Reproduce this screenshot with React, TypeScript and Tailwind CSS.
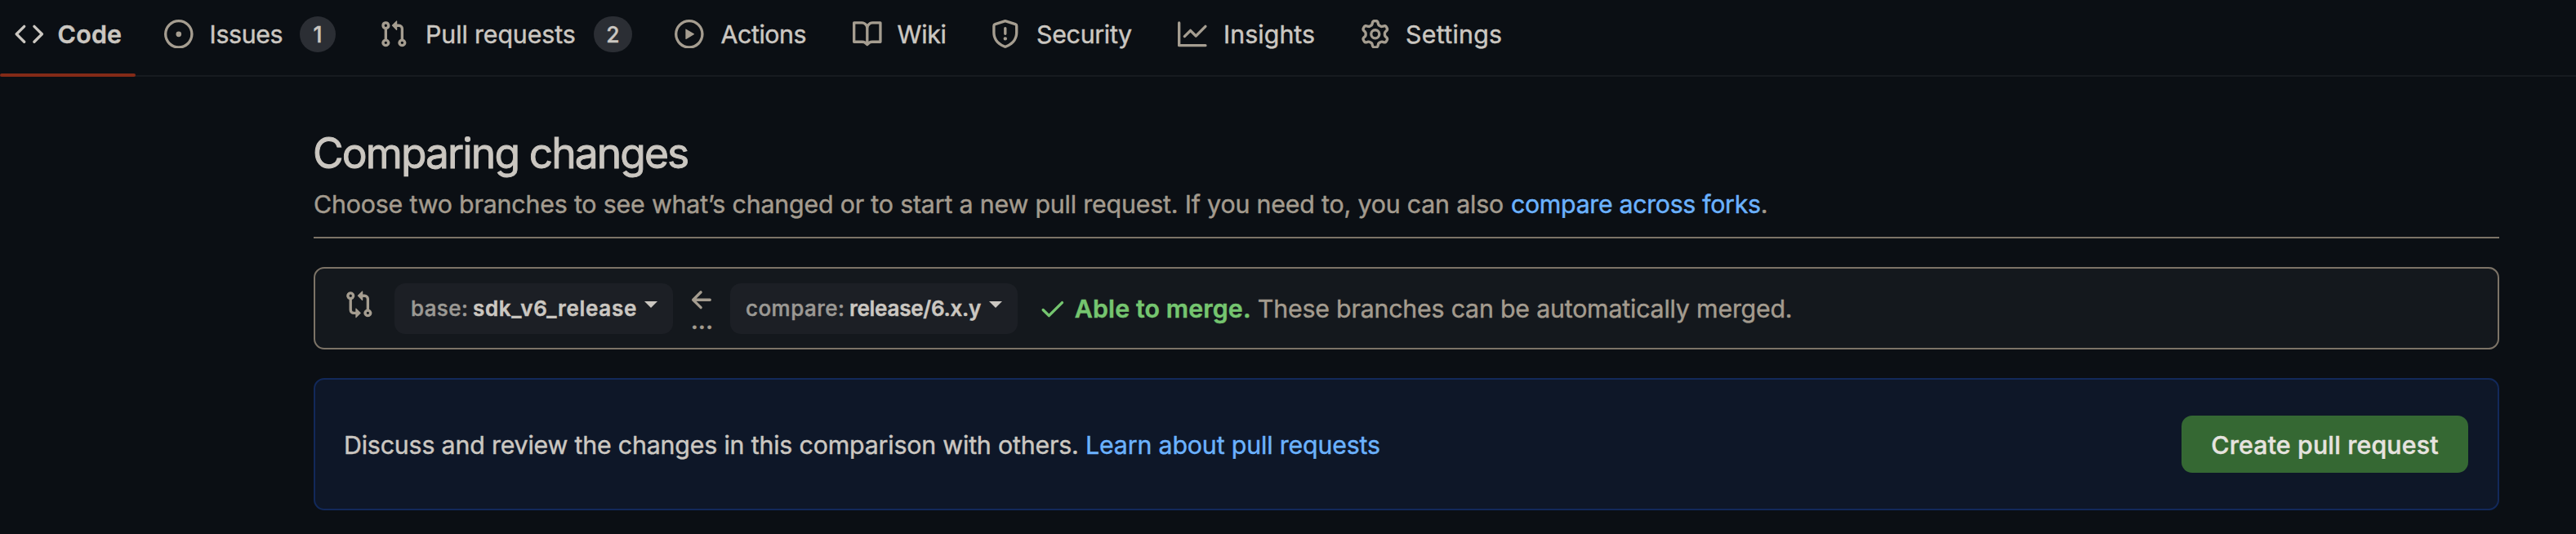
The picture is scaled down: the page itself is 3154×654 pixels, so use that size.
import type { ReactNode } from "react";

const paths = {
  code: "m11.28 3.22 4.25 4.25a.75.75 0 0 1 0 1.06l-4.25 4.25a.749.749 0 0 1-1.275-.326.749.749 0 0 1 .215-.734L13.94 8l-3.72-3.72a.749.749 0 0 1 .326-1.275.749.749 0 0 1 .734.215Zm-6.56 0a.751.751 0 0 1 1.042.018.751.751 0 0 1 .018 1.042L2.06 8l3.72 3.72a.749.749 0 0 1-.326 1.275.749.749 0 0 1-.734-.215L.47 8.53a.75.75 0 0 1 0-1.06Z",
  issue: "M8 9.5a1.5 1.5 0 1 0 0-3 1.5 1.5 0 0 0 0 3ZM8 0a8 8 0 1 1 0 16A8 8 0 0 1 8 0ZM1.5 8a6.5 6.5 0 1 0 13 0 6.5 6.5 0 0 0-13 0Z",
  pull: "M1.5 3.25a2.25 2.25 0 1 1 3 2.122v5.256a2.251 2.251 0 1 1-1.5 0V5.372A2.25 2.25 0 0 1 1.5 3.25Zm5.677-.177L9.573.677A.25.25 0 0 1 10 .854V2.5h1A2.5 2.5 0 0 1 13.5 5v5.628a2.251 2.251 0 1 1-1.5 0V5a1 1 0 0 0-1-1h-1v1.646a.25.25 0 0 1-.427.177L7.177 3.427a.25.25 0 0 1 0-.354ZM3.75 2.5a.75.75 0 1 0 0 1.5.75.75 0 0 0 0-1.5Zm0 9.5a.75.75 0 1 0 0 1.5.75.75 0 0 0 0-1.5Zm8.25.75a.75.75 0 1 0 1.5 0 .75.75 0 0 0-1.5 0Z",
  play: "M8 0a8 8 0 1 1 0 16A8 8 0 0 1 8 0ZM1.5 8a6.5 6.5 0 1 0 13 0 6.5 6.5 0 0 0-13 0Zm4.879-2.773 4.264 2.559a.25.25 0 0 1 0 .428l-4.264 2.559A.25.25 0 0 1 6 10.559V5.442a.25.25 0 0 1 .379-.215Z",
  book: "M0 1.75A.75.75 0 0 1 .75 1h4.253c1.227 0 2.317.59 3 1.501A3.743 3.743 0 0 1 11.006 1h4.245a.75.75 0 0 1 .75.75v10.5a.75.75 0 0 1-.75.75h-4.507a2.25 2.25 0 0 0-1.591.659l-.622.621a.75.75 0 0 1-1.06 0l-.622-.621A2.25 2.25 0 0 0 5.258 13H.75a.75.75 0 0 1-.75-.75Zm7.251 10.324.004-5.073-.002-2.253A2.25 2.25 0 0 0 5.003 2.5H1.5v9h3.757a3.75 3.75 0 0 1 1.994.574ZM8.755 4.75l-.004 7.322a3.752 3.752 0 0 1 1.992-.572H14.5v-9h-3.495a2.25 2.25 0 0 0-2.25 2.25Z",
  shield: "M7.467.133a1.748 1.748 0 0 1 1.066 0l5.25 1.68A1.75 1.75 0 0 1 15 3.48V7c0 1.566-.32 3.182-1.303 4.682-.983 1.498-2.585 2.813-5.032 3.855a1.697 1.697 0 0 1-1.33 0c-2.447-1.042-4.049-2.357-5.032-3.855C1.32 10.182 1 8.566 1 7V3.48a1.75 1.75 0 0 1 1.217-1.667Zm.61 1.429a.25.25 0 0 0-.153 0l-5.25 1.68a.25.25 0 0 0-.174.238V7c0 1.358.275 2.666 1.057 3.86.784 1.194 2.121 2.34 4.366 3.297a.196.196 0 0 0 .154 0c2.245-.956 3.582-2.104 4.366-3.298C13.225 9.666 13.5 8.36 13.5 7V3.48a.251.251 0 0 0-.174-.237l-5.25-1.68ZM8.75 4.75v3a.75.75 0 0 1-1.5 0v-3a.75.75 0 0 1 1.5 0ZM9 10.5a1 1 0 1 1-2 0 1 1 0 0 1 2 0Z",
  graph: "M1.5 1.75V13.5h13.75a.75.75 0 0 1 0 1.5H.75a.75.75 0 0 1-.75-.75V1.75a.75.75 0 0 1 1.5 0Zm14.28 2.53-5.25 5.25a.75.75 0 0 1-1.06 0L7 7.06 4.28 9.78a.751.751 0 0 1-1.042-.018.751.751 0 0 1-.018-1.042l3.25-3.25a.75.75 0 0 1 1.06 0L10 7.94l4.72-4.72a.751.751 0 0 1 1.042.018.751.751 0 0 1 .018 1.042Z",
  gear: "M8 0a8.2 8.2 0 0 1 .701.031C9.444.095 9.99.645 10.16 1.29l.288 1.107c.018.066.079.158.212.224.231.114.454.243.668.386.123.082.233.09.299.071l1.103-.303c.644-.176 1.392.021 1.82.63.27.385.506.792.704 1.218.315.675.111 1.422-.364 1.891l-.814.806c-.049.048-.098.147-.088.294.016.257.016.515 0 .772-.01.147.038.246.088.294l.814.806c.475.469.679 1.216.364 1.891a7.977 7.977 0 0 1-.704 1.217c-.428.61-1.176.807-1.82.63l-1.102-.302c-.067-.019-.177-.011-.3.071a5.909 5.909 0 0 1-.668.386c-.133.066-.194.158-.211.224l-.29 1.106c-.168.646-.715 1.196-1.458 1.26a8.006 8.006 0 0 1-1.402 0c-.743-.064-1.289-.614-1.458-1.26l-.289-1.106c-.018-.066-.079-.158-.212-.224a5.738 5.738 0 0 1-.668-.386c-.123-.082-.233-.09-.299-.071l-1.103.303c-.644.176-1.392-.021-1.82-.63a8.12 8.12 0 0 1-.704-1.218c-.315-.675-.111-1.422.363-1.891l.815-.806c.05-.048.098-.147.088-.294a6.214 6.214 0 0 1 0-.772c.01-.147-.038-.246-.088-.294l-.815-.806C.635 6.045.431 5.298.746 4.623a7.92 7.92 0 0 1 .704-1.217c.428-.61 1.176-.807 1.82-.63l1.102.302c.067.019.177.011.3-.071.214-.143.437-.272.668-.386.133-.066.194-.158.211-.224l.29-1.106C6.009.645 6.556.095 7.299.03 7.53.01 7.764 0 8 0Zm-.571 1.525c-.036.003-.108.036-.137.146l-.289 1.105c-.147.561-.549.967-.998 1.189-.173.086-.34.183-.5.29-.417.278-.97.423-1.529.27l-1.103-.303c-.109-.03-.175.016-.195.045-.22.312-.412.644-.573.99-.014.031-.021.11.059.19l.815.806c.411.406.562.957.53 1.456a4.709 4.709 0 0 0 0 .582c.032.499-.119 1.05-.53 1.456l-.815.806c-.081.08-.073.159-.059.19.162.346.353.677.573.989.02.03.085.076.195.046l1.102-.303c.56-.153 1.113-.008 1.53.27.161.107.328.204.501.29.447.222.85.629.997 1.189l.289 1.105c.029.109.101.143.137.146a6.6 6.6 0 0 0 1.142 0c.036-.003.108-.036.137-.146l.289-1.105c.147-.561.549-.967.998-1.189.173-.086.34-.183.5-.29.417-.278.97-.423 1.529-.27l1.103.303c.109.029.175-.016.195-.045.22-.313.411-.644.573-.99.014-.031.021-.11-.059-.19l-.815-.806c-.411-.406-.562-.957-.53-1.456a4.709 4.709 0 0 0 0-.582c-.032-.499.119-1.05.53-1.456l.815-.806c.081-.08.073-.159.059-.19a6.464 6.464 0 0 0-.573-.989c-.02-.03-.085-.076-.195-.046l-1.102.303c-.56.153-1.113.008-1.53-.27a4.44 4.44 0 0 0-.501-.29c-.447-.222-.85-.629-.997-1.189l-.289-1.105c-.029-.11-.101-.143-.137-.146a6.6 6.6 0 0 0-1.142 0ZM11 8a3 3 0 1 1-6 0 3 3 0 0 1 6 0ZM9.5 8a1.5 1.5 0 1 0-3.001.001A1.5 1.5 0 0 0 9.5 8Z",
  compare: "M9.573.677A.25.25 0 0 1 10 .854V2.5h1A2.5 2.5 0 0 1 13.5 5v5.628a2.251 2.251 0 1 1-1.5 0V5a1 1 0 0 0-1-1h-1v1.646a.25.25 0 0 1-.427.177L7.177 3.427a.25.25 0 0 1 0-.354ZM6 12v-1.646a.25.25 0 0 1 .427-.177l2.396 2.396a.25.25 0 0 1 0 .354l-2.396 2.396A.25.25 0 0 1 6 15.146V13.5H5A2.5 2.5 0 0 1 2.5 11V5.372a2.25 2.25 0 1 1 1.5 0V11a1 1 0 0 0 1 1ZM4 3.25a.75.75 0 1 0-1.5 0 .75.75 0 0 0 1.5 0ZM12.75 12a.75.75 0 1 0 0 1.5.75.75 0 0 0 0-1.5Z",
  arrow: "M7.78 12.53a.75.75 0 0 1-1.06 0L2.47 8.28a.75.75 0 0 1 0-1.06l4.25-4.25a.751.751 0 0 1 1.042.018.751.751 0 0 1 .018 1.042L4.81 7h7.44a.75.75 0 0 1 0 1.5H4.81l2.97 2.97a.75.75 0 0 1 0 1.06Z",
  check: "M13.78 4.22a.75.75 0 0 1 0 1.06l-7.25 7.25a.75.75 0 0 1-1.06 0L2.22 9.28a.751.751 0 0 1 .018-1.042.751.751 0 0 1 1.042-.018L6 10.94l6.72-6.72a.75.75 0 0 1 1.06 0Z",
};

function Icon({ name, className }: { name: keyof typeof paths; className: string }) {
  return (
    <svg viewBox="0 0 16 16" fill="currentColor" className={`size-[35.6px] shrink-0 ${className}`}>
      <path d={paths[name]} />
    </svg>
  );
}

type Tab = {
  icon: keyof typeof paths;
  label: string;
  item: string;
  text: string;
  count?: number;
  badge?: string;
  active?: boolean;
};

const tabs: Tab[] = [
  { icon: "code", label: "Code", item: "w-[183px]", text: "ml-[17px] font-semibold tracking-[0.27px]", active: true },
  { icon: "issue", label: "Issues", item: "w-[262.5px]", text: "ml-[20px] tracking-[-0.34px]", count: 1, badge: "mr-[52.5px] w-11" },
  { icon: "pull", label: "Pull requests", item: "w-[362.5px]", text: "ml-[22px] tracking-[-0.1px]", count: 2, badge: "mr-[52px] w-[47px]" },
  { icon: "play", label: "Actions", item: "w-[218px]", text: "ml-[21px] tracking-[-0.42px]" },
  { icon: "book", label: "Wiki", item: "w-[168.5px]", text: "ml-[19px] tracking-[-0.27px]" },
  { icon: "shield", label: "Security", item: "w-[229.5px]", text: "ml-[21px] tracking-[-0.29px]" },
  { icon: "graph", label: "Insights", item: "w-[223.5px]", text: "ml-[20.5px] tracking-[0.07px]" },
  { icon: "gear", label: "Settings", item: "w-[200px]", text: "ml-[20px] tracking-[0.28px]" },
];

function Select({ className, children }: { className: string; children: ReactNode }) {
  return (
    <button className={`flex h-[62px] shrink-0 items-center rounded-[13px] bg-[#1c1f25] text-left text-[26px] text-[#cbc7c1] ${className}`}>
      {children}
      <svg viewBox="0 0 16 8" className="mb-[9px] h-2 w-4 shrink-0" fill="currentColor">
        <path d="M0 0h16L8 8Z" />
      </svg>
    </button>
  );
}

export default function App() {
  return (
    <div className="h-[654px] w-[3154px] overflow-hidden bg-[#0b0f14] font-['Inter',sans-serif] text-[30.3px] leading-[44px] whitespace-nowrap text-[#cbc7c1] [-webkit-text-stroke:0.45px]">
      <nav className="relative flex h-[94px] items-start border-b-2 border-[#171b20] pl-[18px]">
        {tabs.map((t) => (
          <a key={t.label} className={`flex h-[83px] shrink-0 items-center ${t.item}`}>
            <Icon name={t.icon} className={t.active ? "text-[#cbc7c1]" : "text-[#a59d90]"} />
            <span className={t.text}>{t.label}</span>
            {t.count && (
              <span className={`ml-auto flex h-11 items-center justify-center rounded-full bg-[#2b2e34] text-[26.4px] font-medium ${t.badge}`}>
                {t.count}
              </span>
            )}
          </a>
        ))}
        <span className="absolute top-[90px] left-0 h-1 w-[166px] rounded-full bg-[#842a17]" />
      </nav>

      <main className="ml-[384px] w-[2676px] pt-[63px]">
        <header className="border-b-2 border-[#7c7367] pb-[18px]">
          <h1 className="-ml-px text-[51.5px] leading-[60px] tracking-[-1.91px] [-webkit-text-stroke:0.9px]">Comparing changes</h1>
          <p className="mt-[11px] flex text-[#a39b8e]">
            <span className="w-[1466px] tracking-[-0.16px]">
              Choose two branches to see what’s changed or to start a new pull request. If you need to, you can also
            </span>
            <a className="tracking-[-0.308px] text-[#6bb2ff]">compare across forks</a>.
          </p>
        </header>

        <section className="mt-[35px] flex h-[101px] items-center rounded-[13px] border-2 border-[#7c7367] bg-[#14181d] pl-[35.7px] text-[#a39b8e]">
          <Icon name="compare" className="mb-[10px] text-[#a59d90]" />
          <Select className="ml-[25.7px] w-[341px] pl-5">
            <span className="w-[76px] font-medium tracking-[0.4px] text-[#9b9994]">base:</span>
            <span className="w-[210px] font-semibold tracking-[0.69px]">sdk_v6_release</span>
          </Select>
          <div className="mb-[6px] ml-[18px] flex w-[35px] flex-col items-center text-[#a59d90]">
            <Icon name="arrow" className="" />
            <span className="leading-[14px] font-medium">...</span>
          </div>
          <Select className="ml-[17px] w-[352px] pl-[19px]">
            <span className="w-[127px] font-medium tracking-[0.46px] text-[#9b9994]">compare:</span>
            <span className="w-[171px] font-semibold tracking-[-0.26px]">release/6.x.y</span>
          </Select>
          <Icon name="check" className="ml-[25.3px] text-[#75c56f]" />
          <strong className="ml-[9px] w-[224px] font-semibold tracking-[0.13px] text-[#75c56f]">Able to merge.</strong>
          <span className="tracking-[-0.185px]">These branches can be automatically merged.</span>
        </section>

        <section className="mt-[35px] flex h-[162px] items-center rounded-[13px] border-2 border-[#12295a] bg-[#0e1728] pr-9 pl-[35px]">
          <span className="mt-[2px] w-[908px] tracking-[-0.167px]">
            Discuss and review the changes in this comparison with others.
          </span>
          <a className="mt-[2px] tracking-[-0.14px] text-[#6bb2ff]">Learn about pull requests</a>
          <button className="ml-auto h-[70px] w-[351px] rounded-[13px] bg-[#356833] pt-px font-medium tracking-[0.17px] text-[#e6e3df]">
            Create pull request
          </button>
        </section>
      </main>
    </div>
  );
}
